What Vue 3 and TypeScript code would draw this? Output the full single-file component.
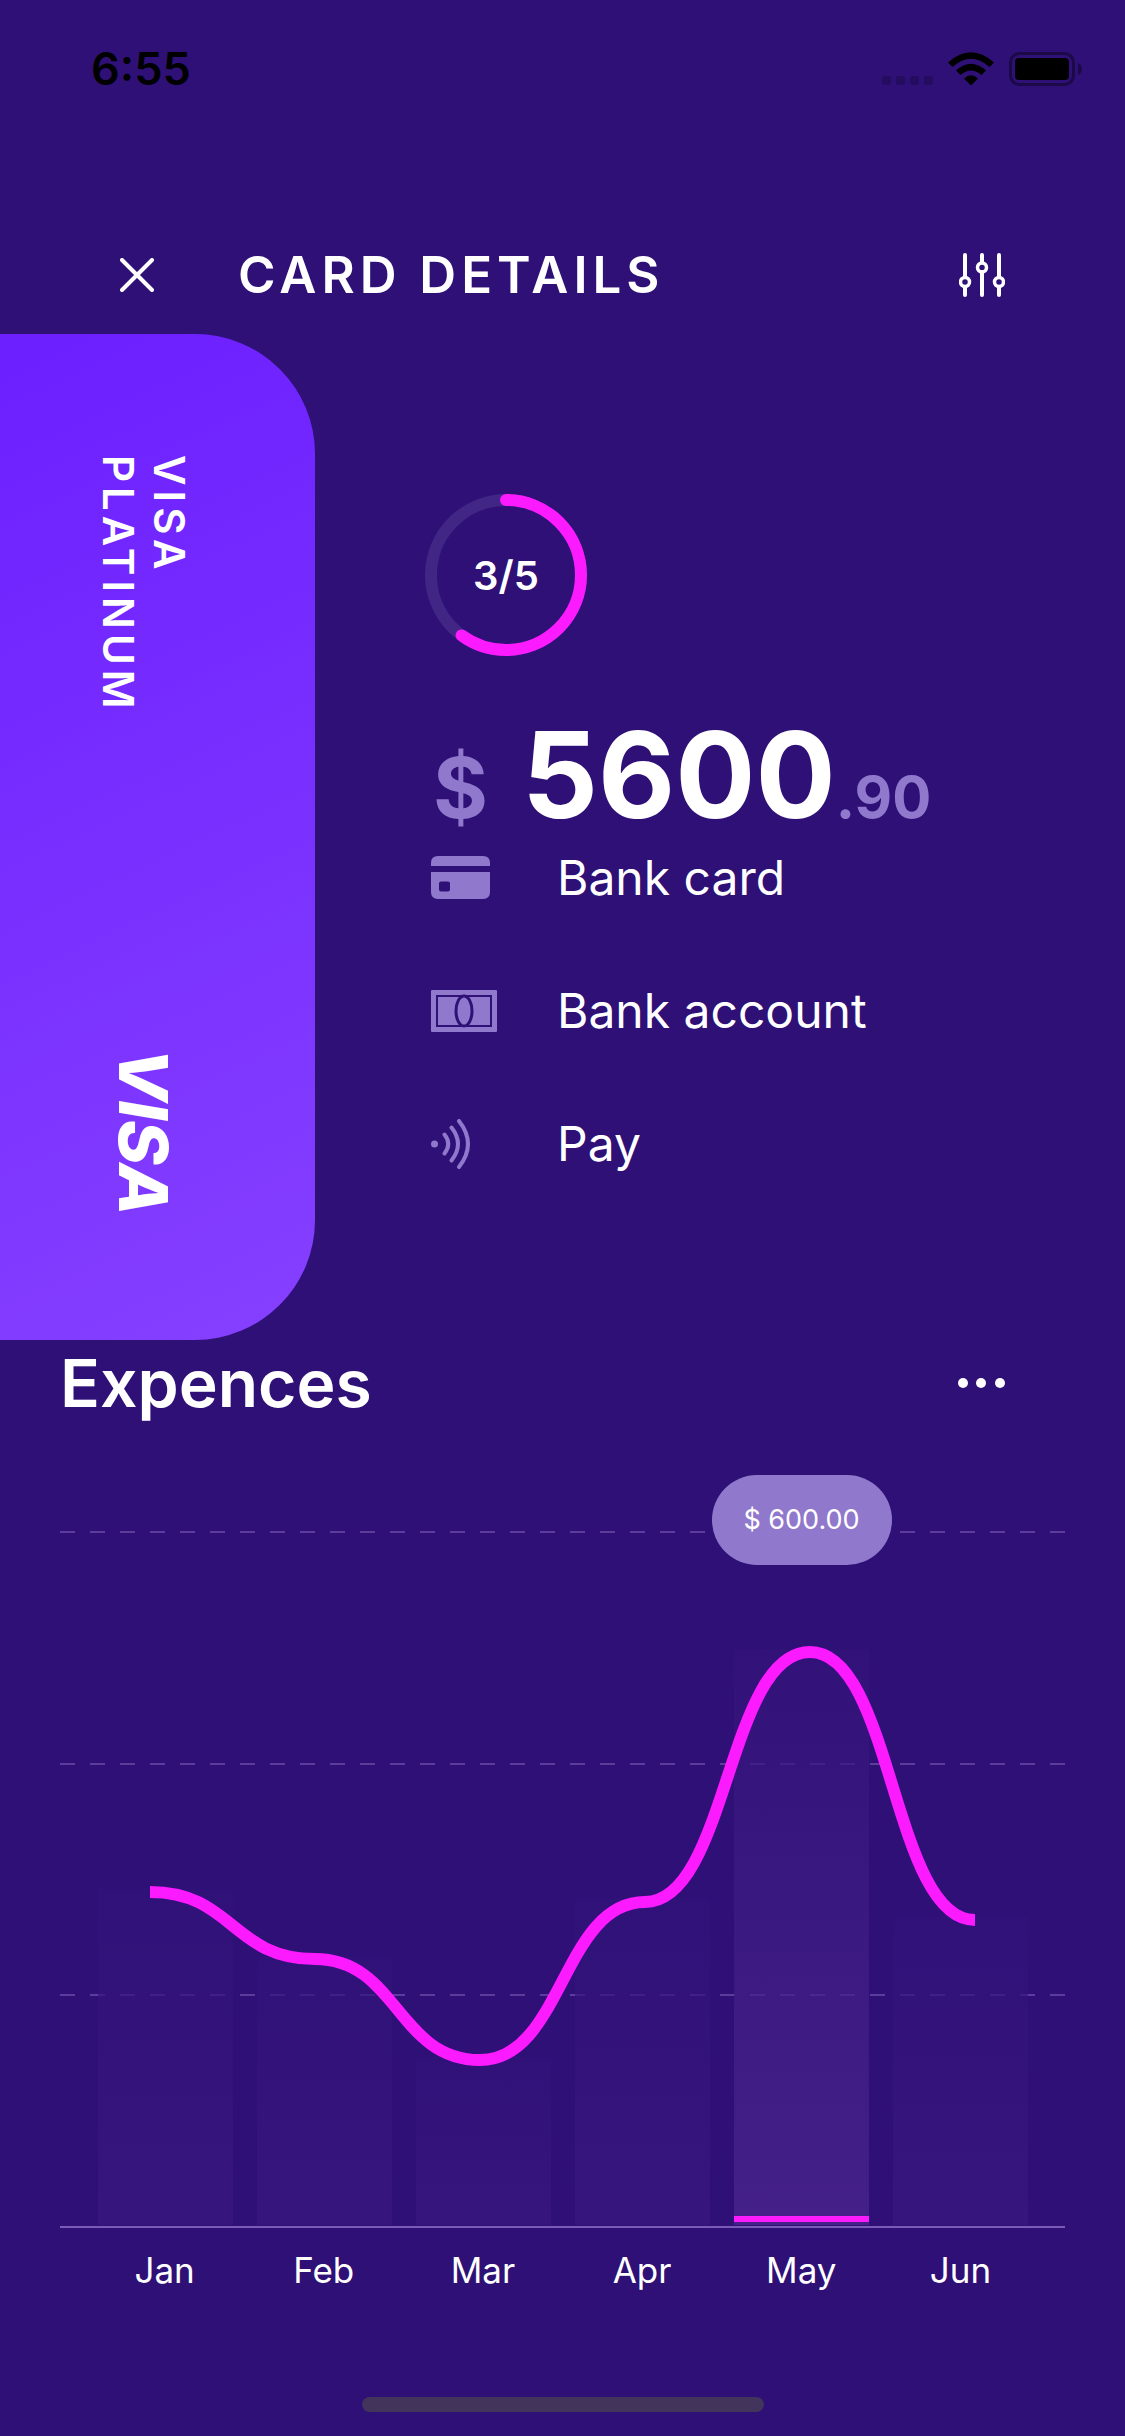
<script setup lang="ts">
interface Month {
  label: string
  barTop: number
  lineY: number
}

const months: Month[] = [
  { label: 'Jan', barTop: 414, lineY: 417 },
  { label: 'Feb', barTop: 482, lineY: 484 },
  { label: 'Mar', barTop: 582, lineY: 585 },
  { label: 'Apr', barTop: 424, lineY: 427 },
  { label: 'May', barTop: 174, lineY: 177 },
  { label: 'Jun', barTop: 442, lineY: 445 },
]

const activeIndex = 4
const chartWidth = 1005
const chartHeight = 753
const barWidth = 135
const barBottom = 750
const gridLines = [57, 289, 520]

const barX = (i: number): number => 38 + i * 159
const pointX = (i: number): number => 90 + i * 165

const curve = months
  .map((m, i) => {
    if (i === 0) return `M${pointX(0)} ${m.lineY}`
    const mid = (pointX(i - 1) + pointX(i)) / 2
    return `C${mid} ${months[i - 1].lineY} ${mid} ${m.lineY} ${pointX(i)} ${m.lineY}`
  })
  .join(' ')

const tooltipLeft = `${((barX(activeIndex) + barWidth / 2) / chartWidth) * 100}%`

const ringRadius = 75
const ringLength = 2 * Math.PI * ringRadius
const ringDash = `${ringLength * 0.6} ${ringLength}`
</script>

<template>
  <div class="screen">
    <div class="status">
      <span class="time">6:55</span>
      <svg width="200" height="34" viewBox="0 0 200 34" aria-hidden="true">
        <g opacity="0.2">
          <rect v-for="i in 4" :key="i" :x="(i - 1) * 14" y="24" width="9" height="9" rx="3" />
        </g>
        <path d="M66 10.500Q89 -10 112 10.500L107.500 15Q89 -1.500 70.500 15Z" />
        <path d="M74 18.500Q89 5 104 18.500L99.500 23Q89 14 78.500 23Z" />
        <path d="M82 26.500Q89 20 96 26.500L89 33.500Z" />
        <g opacity="0.38">
          <rect x="128.500" y="1.500" width="63" height="31" rx="9" fill="none" stroke="#000" stroke-width="3" />
          <path d="M196 11Q200 13 200 17T196 23Z" />
        </g>
        <rect x="133" y="6" width="54" height="22" rx="4" />
      </svg>
    </div>

    <header class="header">
      <button class="icon-button" type="button" aria-label="Close">
        <svg width="34" height="34" viewBox="0 0 34 34">
          <path d="M2 2L32 32M32 2L2 32" fill="none" stroke="#fff" stroke-width="4" stroke-linecap="round" />
        </svg>
      </button>
      <h1 class="title">CARD DETAILS</h1>
      <button class="icon-button push" type="button" aria-label="Settings">
        <svg width="46" height="44" viewBox="0 0 46 44">
          <g fill="none" stroke="#fff" stroke-width="4" stroke-linecap="round">
            <path d="M6 2V24M6 34V42M23 2V9M23 19V42M40 2V24M40 34V42" />
            <circle cx="6" cy="29" r="4.500" stroke-width="3.500" />
            <circle cx="23" cy="14.500" r="4.500" stroke-width="3.500" />
            <circle cx="40" cy="29" r="4.500" stroke-width="3.500" />
          </g>
        </svg>
      </button>
    </header>

    <section class="summary">
      <div class="card">
        <p class="card-name">VISA<br />PLATINUM</p>
        <p class="card-brand">VISA</p>
      </div>

      <div class="details">
        <div class="ring">
          <svg width="162" height="162" viewBox="0 0 162 162" aria-hidden="true">
            <circle class="ring-track" cx="81" cy="81" :r="ringRadius" />
            <circle
              class="ring-value"
              cx="81"
              cy="81"
              :r="ringRadius"
              :stroke-dasharray="ringDash"
              transform="rotate(-90 81 81)"
            />
          </svg>
          <span class="ring-label">3/5</span>
        </div>

        <p class="amount">
          <span class="currency">$</span>
          <span class="whole">5600</span>
          <span class="cents">.90</span>
        </p>

        <ul class="methods">
          <li>
            <span class="method-icon">
              <svg width="60" height="44" viewBox="0 0 60 44">
                <path d="M0 10V7Q0 0 7 0H52Q59 0 59 7V10Z" />
                <path
                  fill-rule="evenodd"
                  d="M0 16H59V36Q59 43 52 43H7Q0 43 0 36ZM10 25.500Q8 25.500 8 27.500V33.500Q8 35.500 10 35.500H17Q19 35.500 19 33.500V27.500Q19 25.500 17 25.500Z"
                />
              </svg>
            </span>
            Bank card
          </li>
          <li>
            <span class="method-icon">
              <svg width="66" height="42" viewBox="0 0 66 42">
                <rect width="66" height="42" rx="1" />
                <g class="cut">
                  <rect x="6" y="6" width="54" height="30" />
                  <ellipse cx="33" cy="21" rx="8" ry="15" stroke-width="3" />
                </g>
              </svg>
            </span>
            Bank account
          </li>
          <li>
            <span class="method-icon">
              <svg width="40" height="50" viewBox="0 0 40 50">
                <circle cx="3.500" cy="25" r="3.500" />
                <path
                  class="wave"
                  d="M13.500 15.500Q21 25 13.500 34.500M20.500 8.500Q33.500 25 20.500 41.500M28 2Q46 25 28 48"
                />
              </svg>
            </span>
            Pay
          </li>
        </ul>
      </div>
    </section>

    <section class="expenses">
      <div class="expenses-head">
        <h2>Expences</h2>
        <button class="icon-button" type="button" aria-label="More">
          <svg width="48" height="12" viewBox="0 0 48 12" fill="#fff">
            <circle cx="6" cy="6" r="5" />
            <circle cx="24" cy="6" r="5" />
            <circle cx="43" cy="6" r="5" />
          </svg>
        </button>
      </div>

      <div class="chart">
        <svg class="plot" :viewBox="`0 0 ${chartWidth} ${chartHeight}`" role="img" aria-label="Expences by month">
          <defs>
            <linearGradient id="bar" x1="0" y1="0" x2="0" y2="1">
              <stop offset="0" stop-color="#31127a" />
              <stop offset="1" stop-color="#3a197f" />
            </linearGradient>
            <linearGradient id="bar-active" x1="0" y1="0" x2="0" y2="1">
              <stop offset="0" stop-color="#33137a" />
              <stop offset="1" stop-color="#4d2790" />
            </linearGradient>
          </defs>
          <line v-for="y in gridLines" :key="y" class="grid" x1="0" :x2="chartWidth" :y1="y" :y2="y" />
          <rect
            v-for="(m, i) in months"
            :key="m.label"
            :x="barX(i)"
            :y="m.barTop"
            :width="barWidth"
            :height="barBottom - m.barTop"
            :fill="i === activeIndex ? 'url(#bar-active)' : 'url(#bar)'"
            fill-opacity="0.7"
          />
          <rect class="marker" :x="barX(activeIndex)" y="741" :width="barWidth" height="6" />
          <line class="axis" x1="0" :x2="chartWidth" y1="752" y2="752" />
          <path class="curve" :d="curve" />
        </svg>
        <div class="tooltip" :style="{ left: tooltipLeft }">$ 600.00</div>
      </div>

      <div class="months">
        <span v-for="m in months" :key="m.label">{{ m.label }}</span>
      </div>
    </section>

    <div class="home-indicator"></div>
  </div>
</template>

<style>
body {
  margin: 0;
  background: #2e1076;
}
</style>

<style scoped>
.screen {
  box-sizing: border-box;
  display: flex;
  flex-direction: column;
  min-height: 100vh;
  padding-bottom: 24px;
  background: #2e1076;
  color: #fff;
  font-family: Inter, "Liberation Sans", sans-serif;
}

svg {
  display: block;
}

h1,
h2,
p,
ul {
  margin: 0;
  padding: 0;
}

.status {
  display: flex;
  align-items: center;
  justify-content: space-between;
  height: 138px;
  padding: 0 43px 0 91px;
  color: #000;
}

.time {
  font-size: 45px;
  font-weight: 600;
  line-height: 54px;
}

.header {
  box-sizing: border-box;
  display: flex;
  align-items: center;
  height: 196px;
  padding: 78px 120px 0;
}

.icon-button {
  padding: 0;
  border: 0;
  background: none;
  cursor: pointer;
}

.push {
  margin-left: auto;
}

.title {
  margin-left: 84px;
  font-size: 51px;
  font-weight: 600;
  line-height: 60px;
  letter-spacing: 5px;
}

.summary {
  display: flex;
}

.card {
  box-sizing: border-box;
  display: flex;
  flex-direction: column;
  align-items: center;
  justify-content: space-between;
  width: 28%;
  min-height: 1006px;
  padding: 121px 28px 124px 0;
  border-radius: 0 120px 120px 0;
  background: linear-gradient(155deg, #6c1fff, #8540ff);
}

.card-name {
  writing-mode: vertical-rl;
  font-size: 42px;
  font-weight: 600;
  line-height: 51px;
  letter-spacing: 5px;
}

.card-brand {
  writing-mode: vertical-rl;
  font-size: 68px;
  font-style: italic;
  font-weight: 800;
  line-height: 84px;
}

.details {
  flex: 1;
  padding: 160px 0 0 110px;
}

.ring {
  display: grid;
  width: 162px;
  place-items: center;
}

.ring > * {
  grid-area: 1 / 1;
}

.ring circle {
  fill: none;
  stroke-width: 12;
}

.ring .ring-track {
  stroke: #412685;
}

.ring .ring-value {
  stroke: #fc1aff;
  stroke-linecap: round;
}

.ring-label {
  font-size: 40px;
  font-weight: 600;
  line-height: 51px;
}

.amount {
  display: flex;
  align-items: baseline;
  height: 100px;
  margin-top: 69px;
  padding-left: 8px;
  font-weight: 700;
  line-height: 100px;
}

.currency {
  margin-right: 34px;
  color: #9078cc;
  font-size: 84px;
}

.whole {
  font-size: 119px;
}

.cents {
  color: #9078cc;
  font-size: 58px;
}

.methods {
  display: flex;
  flex-direction: column;
  gap: 79px;
  margin-top: 26px;
  padding-left: 6px;
  list-style: none;
}

.methods li {
  display: flex;
  align-items: center;
  font-size: 48px;
  line-height: 54px;
}

.method-icon {
  width: 126px;
  fill: #9078cc;
}

.cut {
  fill: none;
  stroke: #2e1076;
  stroke-width: 2;
}

.wave {
  fill: none;
  stroke: #9078cc;
  stroke-width: 4;
  stroke-linecap: round;
}

.expenses {
  padding: 0 60px;
}

.expenses-head {
  display: flex;
  align-items: center;
  justify-content: space-between;
  height: 86px;
  padding-right: 60px;
}

.expenses-head h2 {
  font-size: 66px;
  font-weight: 600;
  line-height: 86px;
}

.chart {
  position: relative;
  margin-top: 49px;
}

.plot {
  width: 100%;
}

.grid {
  stroke: #5c3d9c;
  stroke-width: 2;
  stroke-dasharray: 15 15;
}

.axis {
  stroke: #7a5bb8;
  stroke-width: 2;
}

.marker {
  fill: #fc1aff;
}

.curve {
  fill: none;
  stroke: #fc1aff;
  stroke-width: 12;
}

.tooltip {
  position: absolute;
  top: 0;
  width: 180px;
  border-radius: 45px;
  background: #9078cc;
  font-size: 27px;
  line-height: 90px;
  text-align: center;
  transform: translateX(-50%);
}

.months {
  display: grid;
  grid-template-columns: repeat(6, 1fr);
  margin-top: 15px;
  padding: 0 25px;
  font-size: 35px;
  line-height: 54px;
  text-align: center;
}

.home-indicator {
  align-self: center;
  width: 402px;
  height: 15px;
  margin-top: auto;
  border-radius: 8px;
  background: #42345a;
}
</style>
